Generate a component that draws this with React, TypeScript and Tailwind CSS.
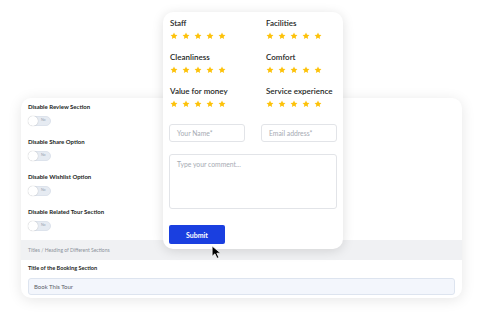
import React from "react";

const Star = () => (
  <svg width="8" height="8" viewBox="0 0 24 24" className="shrink-0">
    <path
      d="M12 1.5l3.1 6.6 7.2.9-5.3 5 1.4 7.1L12 17.6 5.6 21.1 7 14l-5.3-5 7.2-.9z"
      fill="#fdc20a"
    />
  </svg>
);

const Stars = () => (
  <div className="flex gap-[4px] mt-[4px]">
    <Star />
    <Star />
    <Star />
    <Star />
    <Star />
  </div>
);

const Rating = ({ label }: { label: string }) => (
  <div className="flex flex-col">
    <div className="text-[8px] leading-[10px] font-semibold text-[#1d1f24]">{label}</div>
    <Stars />
  </div>
);

const Toggle = () => (
  <div className="w-[23px] h-[10px] rounded-full bg-[#e6ebf2] border border-[#dde3ec] flex items-center relative">
    <div className="w-[10px] h-[10px] rounded-full bg-white shadow-[0_0_1px_rgba(0,0,0,0.3)] -ml-[1px]" />
    <span className="text-[3.5px] text-[#9aa3b0] ml-[3px] leading-none">No</span>
  </div>
);

const ToggleRow = ({ label }: { label: string }) => (
  <div className="flex flex-col">
    <div className="text-[6px] leading-[8px] font-bold text-[#1d1f24]">{label}</div>
    <div className="mt-[5px]">
      <Toggle />
    </div>
  </div>
);

export default function App() {
  const font = { fontFamily: "Lato, 'Noto Sans', sans-serif" };
  return (
    <div className="w-[498px] h-[316px] bg-white relative overflow-hidden" style={font}>
      {/* background settings panel */}
      <div className="ml-[21px] mt-[98px] w-[441px] h-[200px] bg-white rounded-[10px] shadow-[0_2px_14px_rgba(0,0,0,0.10)] overflow-hidden flex flex-col">
        <div className="flex flex-col gap-[12px] px-[7px] pt-[5px]">
          <ToggleRow label="Disable Review Section" />
          <ToggleRow label="Disable Share Option" />
          <ToggleRow label="Disable Wishlist Option" />
          <ToggleRow label="Disable Related Tour Section" />
        </div>
        <div className="mt-[9px] h-[20px] bg-[#f0f1f3] flex items-center px-[7px]">
          <span className="text-[5px] leading-[8px] text-[#8c929b]">Titles / Heading of Different Sections</span>
        </div>
        <div className="px-[7px] pt-[4px]">
          <div className="text-[5.6px] leading-[8px] font-bold text-[#1d1f24]">Title of the Booking Section</div>
          <div className="mt-[6px] h-[17px] rounded-[3px] bg-[#f3f6fc] border border-[#dde4ef] flex items-center px-[5px]">
            <span className="text-[6px] leading-[8px] text-[#5b6068]">Book This Tour</span>
          </div>
        </div>
      </div>

      {/* review card */}
      <div className="absolute left-[163px] top-[12px] w-[180px] h-[237px] bg-white rounded-[10px] shadow-[0_2px_12px_rgba(0,0,0,0.13)] px-[6px] pt-[6px]">
        <div className="grid grid-cols-[96px_1fr] gap-y-[12px] pl-[1px]">
          <Rating label="Staff" />
          <Rating label="Facilities" />
          <Rating label="Cleanliness" />
          <Rating label="Comfort" />
          <Rating label="Value for money" />
          <Rating label="Service experience" />
        </div>
        <div className="grid grid-cols-2 gap-x-[16px] mt-[16px]">
          <div className="h-[18px] rounded-[3px] border border-[#e2e4e8] flex items-center px-[7px]">
            <span className="text-[6.8px] leading-[8px] text-[#a6abb3]">Your Name*</span>
          </div>
          <div className="h-[18px] rounded-[3px] border border-[#e2e4e8] flex items-center px-[7px]">
            <span className="text-[6.8px] leading-[8px] text-[#a6abb3]">Email address*</span>
          </div>
        </div>
        <div className="mt-[12px] h-[55px] rounded-[3px] border border-[#e2e4e8] px-[7px] pt-[5px] text-[6.8px] leading-[8px] text-[#a6abb3]">
          Type your comment...
        </div>
        <div className="mt-[16px] w-[56px] h-[19px] rounded-[2px] bg-[#1a3fe0] flex items-center justify-center">
          <span className="text-[7px] leading-[8px] font-bold text-white">Submit</span>
        </div>
      </div>

      {/* cursor */}
      <svg className="absolute left-[211px] top-[245px]" width="13" height="14" viewBox="0 0 12 13">
        <path d="M1 1 L1 10.5 L3.6 8.2 L5.6 12.4 L7.3 11.6 L5.4 7.6 L9 7.6 Z" fill="#000" stroke="#fff" strokeWidth="0.7" />
      </svg>
    </div>
  );
}
